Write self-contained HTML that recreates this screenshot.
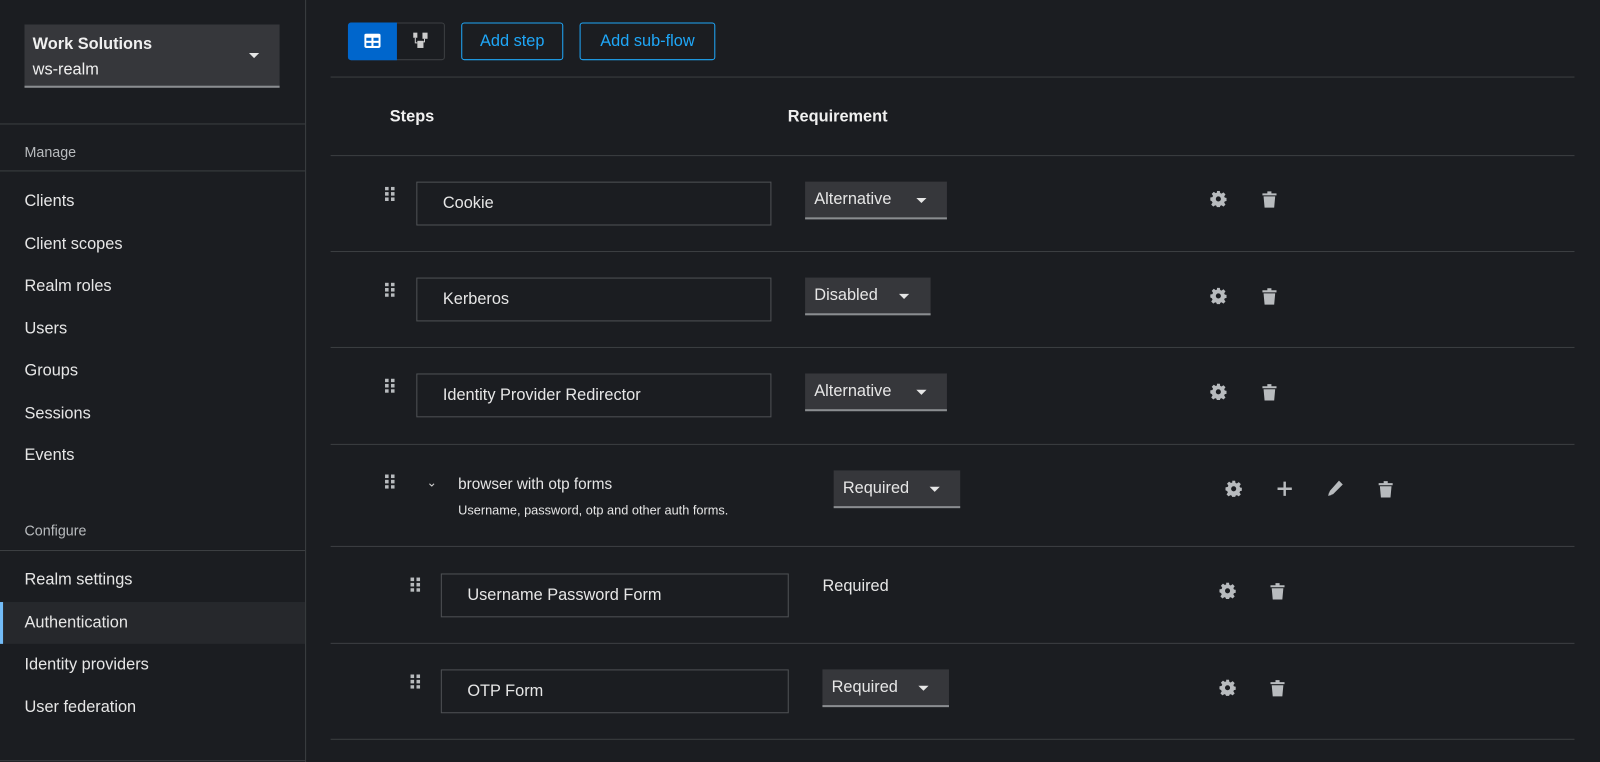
<!DOCTYPE html>
<html><head><meta charset="utf-8"><style>
*{margin:0;padding:0;box-sizing:border-box}
body{width:1600px;height:747px;background:#1b1d21;font-family:"Liberation Sans",sans-serif;color:#e0e0e0;position:relative;overflow:hidden}
#w{position:absolute;left:0;top:0;width:1568px;height:732px;transform:scale(1.0204);transform-origin:0 0}
.a{position:absolute}
.hl{position:absolute;height:1px;background:#3c3f42}
.nav{position:absolute;left:24px;font-size:16px;color:#e6e6e6}
.inp{position:absolute;border:1px solid #4f5255;background:#1b1d21;font-size:16px;color:#e6e6e6;padding-left:25px;display:flex;align-items:center}
.sel{position:absolute;background:#36373b;border-bottom:2px solid #8a8d90;font-size:16px;color:#e6e6e6;padding-left:9px;display:flex;align-items:center;height:37px}
.car{width:0;height:0;border-left:5px solid transparent;border-right:5px solid transparent;border-top:5px solid #e6e6e6;position:absolute;top:16px}
.btn{position:absolute;border:1px solid #1fa7f8;border-radius:3px;color:#1fa7f8;font-size:16px;display:flex;align-items:center;justify-content:center;height:37px;top:22px}
.ic{position:absolute}
.m{left:324px;width:1219px}
</style></head><body><div id="w">
<div class="a" style="left:299px;top:0;width:1px;height:747px;background:#3c3f42"></div>
<div class="a" style="left:24px;top:24px;width:250px;height:62px;background:#36373b;border-bottom:2px solid #8a8d90"></div>
<div class="a" style="left:32px;top:35px;font-size:16px;font-weight:bold;color:#f0f0f0">Work Solutions</div>
<div class="a" style="left:32px;top:60px;font-size:16px;color:#f0f0f0">ws-realm</div>
<div class="car" style="left:244px;top:52px"></div>
<div class="hl" style="left:0;top:121px;width:299px"></div>
<div class="a" style="left:24px;top:141px;font-size:14px;color:#b8bbbe">Manage</div>
<div class="hl" style="left:0;top:167px;width:299px"></div>
<div class="nav" style="top:189px">Clients</div>
<div class="nav" style="top:231px">Client scopes</div>
<div class="nav" style="top:272px">Realm roles</div>
<div class="nav" style="top:314px">Users</div>
<div class="nav" style="top:355px">Groups</div>
<div class="nav" style="top:397px">Sessions</div>
<div class="nav" style="top:438px">Events</div>
<div class="a" style="left:24px;top:512px;font-size:14px;color:#b8bbbe">Configure</div>
<div class="hl" style="left:0;top:539px;width:299px"></div>
<div class="nav" style="top:560px">Realm settings</div>
<div class="a" style="left:0;top:590px;width:299px;height:41px;background:#26282c"></div>
<div class="a" style="left:0;top:590px;width:3px;height:41px;background:#73bcf7"></div>
<div class="nav" style="top:602px">Authentication</div>
<div class="nav" style="top:643px">Identity providers</div>
<div class="nav" style="top:685px">User federation</div>
<div class="hl" style="left:0;top:745px;width:299px"></div>

<div class="a" style="left:341px;top:22px;width:95px;height:37px;border:1px solid #3c3f42;border-radius:3px"></div>
<div class="a" style="left:341px;top:22px;width:48px;height:37px;background:#0066cc;border-radius:3px 0 0 3px"></div>
<svg class="ic" style="left:357px;top:33px" width="16" height="14" viewBox="0 0 16 14"><rect x="0" y="0" width="16" height="14" rx="2" fill="#fff"/><rect x="2" y="4" width="5" height="3" fill="#0066cc"/><rect x="9" y="4" width="5" height="3" fill="#0066cc"/><rect x="2" y="9" width="5" height="3" fill="#0066cc"/><rect x="9" y="9" width="5" height="3" fill="#0066cc"/></svg>
<svg class="ic" style="left:404px;top:31px" width="16" height="18" viewBox="0 0 16 18"><rect x="1" y="1" width="4" height="5" fill="#ccc"/><rect x="10" y="1" width="5" height="6" fill="#ccc"/><rect x="5" y="9" width="6" height="7" fill="#ccc"/><path d="M3 6v5h2M12 7v3h-1" stroke="#ccc" fill="none"/></svg>
<div class="btn" style="left:452px;width:100px">Add step</div>
<div class="btn" style="left:568px;width:133px">Add sub-flow</div>
<div class="hl m" style="top:75px"></div>
<div class="a" style="left:382px;top:106px;font-size:16px;font-weight:bold;color:#f0f0f0">Steps</div>
<div class="a" style="left:772px;top:106px;font-size:16px;font-weight:bold;color:#f0f0f0">Requirement</div>
<div class="hl m" style="top:152px"></div>

<div class="inp" style="left:408px;top:178px;width:348px;height:43px">Cookie</div>
<div class="sel" style="left:789px;top:178px;width:139px">Alternative<div class="car" style="left:109px"></div></div>
<div class="hl m" style="top:246px"></div>
<div class="inp" style="left:408px;top:272px;width:348px;height:43px">Kerberos</div>
<div class="sel" style="left:789px;top:272px;width:123px">Disabled<div class="car" style="left:92px"></div></div>
<div class="hl m" style="top:340px"></div>
<div class="inp" style="left:408px;top:366px;width:348px;height:43px">Identity Provider Redirector</div>
<div class="sel" style="left:789px;top:366px;width:139px">Alternative<div class="car" style="left:109px"></div></div>
<div class="hl m" style="top:435px"></div>
<div class="a" style="left:418px;top:466px;font-size:12px;color:#ccc">&#8964;</div>
<div class="a" style="left:449px;top:466px;font-size:15px;color:#e6e6e6">browser with otp forms</div>
<div class="a" style="left:449px;top:493px;font-size:12.5px;color:#e6e6e6">Username, password, otp and other auth forms.</div>
<div class="sel" style="left:817px;top:461px;width:124px">Required<div class="car" style="left:94px"></div></div>
<div class="hl m" style="top:535px"></div>
<div class="inp" style="left:432px;top:562px;width:341px;height:43px">Username Password Form</div>
<div class="a" style="left:806px;top:566px;font-size:16px;color:#e6e6e6">Required</div>
<div class="hl m" style="top:630px"></div>
<div class="inp" style="left:432px;top:656px;width:341px;height:43px">OTP Form</div>
<div class="sel" style="left:806px;top:656px;width:124px">Required<div class="car" style="left:94px"></div></div>
<div class="hl m" style="top:724px"></div>

<svg width="0" height="0" style="position:absolute">
<defs>
<symbol id="g" viewBox="0 0 16 16"><path fill="#b8bbbe" d="M6.6 0h2.8l.4 2.2 1.3.6 1.9-1.3 2 2-1.3 1.9.6 1.3 2.2.4v2.8l-2.2.4-.6 1.3 1.3 1.9-2 2-1.9-1.3-1.3.6-.4 2.2H6.6l-.4-2.2-1.3-.6-1.9 1.3-2-2 1.3-1.9-.6-1.3L0 9.4V6.6l2.2-.4.6-1.3-1.3-1.9 2-2 1.9 1.3 1.3-.6zM8 5.5a2.5 2.5 0 100 5 2.5 2.5 0 000-5z"/></symbol>
<symbol id="t" viewBox="0 0 14 16"><path fill="#b8bbbe" d="M0 2h14v2H0zM5 0h4v2H5zM1.3 5h11.4l-1 11H2.3z"/></symbol>
<symbol id="d" viewBox="0 0 8 12"><g fill="#b8bbbe"><rect x="0" y="0" width="3" height="3"/><rect x="5" y="0" width="3" height="3"/><rect x="0" y="4.5" width="3" height="3"/><rect x="5" y="4.5" width="3" height="3"/><rect x="0" y="9" width="3" height="3"/><rect x="5" y="9" width="3" height="3"/></g></symbol>
</defs></svg>
<svg class="ic" style="left:377px;top:183px" width="10" height="14"><use href="#d" width="10" height="14"/></svg>
<svg class="ic" style="left:377px;top:277px" width="10" height="14"><use href="#d" width="10" height="14"/></svg>
<svg class="ic" style="left:377px;top:371px" width="10" height="14"><use href="#d" width="10" height="14"/></svg>
<svg class="ic" style="left:377px;top:465px" width="10" height="14"><use href="#d" width="10" height="14"/></svg>
<svg class="ic" style="left:402px;top:566px" width="10" height="14"><use href="#d" width="10" height="14"/></svg>
<svg class="ic" style="left:402px;top:661px" width="10" height="14"><use href="#d" width="10" height="14"/></svg>

<svg class="ic" style="left:1186px;top:187px" width="16" height="16"><use href="#g" width="16" height="16"/></svg>
<svg class="ic" style="left:1237px;top:187px" width="14" height="17"><use href="#t" width="14" height="17"/></svg>
<svg class="ic" style="left:1186px;top:282px" width="16" height="16"><use href="#g" width="16" height="16"/></svg>
<svg class="ic" style="left:1237px;top:282px" width="14" height="17"><use href="#t" width="14" height="17"/></svg>
<svg class="ic" style="left:1186px;top:376px" width="16" height="16"><use href="#g" width="16" height="16"/></svg>
<svg class="ic" style="left:1237px;top:376px" width="14" height="17"><use href="#t" width="14" height="17"/></svg>
<svg class="ic" style="left:1201px;top:471px" width="16" height="16"><use href="#g" width="16" height="16"/></svg>
<svg class="ic" style="left:1251px;top:471px" width="16" height="16"><path d="M8 1v14M1 8h14" stroke="#b8bbbe" stroke-width="2.4"/></svg>
<svg class="ic" style="left:1300px;top:470px" width="17" height="17" viewBox="0 0 16 16"><path fill="#b8bbbe" d="M11.5 1l3.5 3.5-9 9L2 14.5l1-4zM1.5 15l.8-3.2 2.4 2.4z"/></svg>
<svg class="ic" style="left:1351px;top:471px" width="14" height="17"><use href="#t" width="14" height="17"/></svg>
<svg class="ic" style="left:1195px;top:571px" width="16" height="16"><use href="#g" width="16" height="16"/></svg>
<svg class="ic" style="left:1245px;top:571px" width="14" height="17"><use href="#t" width="14" height="17"/></svg>
<svg class="ic" style="left:1195px;top:666px" width="16" height="16"><use href="#g" width="16" height="16"/></svg>
<svg class="ic" style="left:1245px;top:666px" width="14" height="17"><use href="#t" width="14" height="17"/></svg>
</div></body></html>
